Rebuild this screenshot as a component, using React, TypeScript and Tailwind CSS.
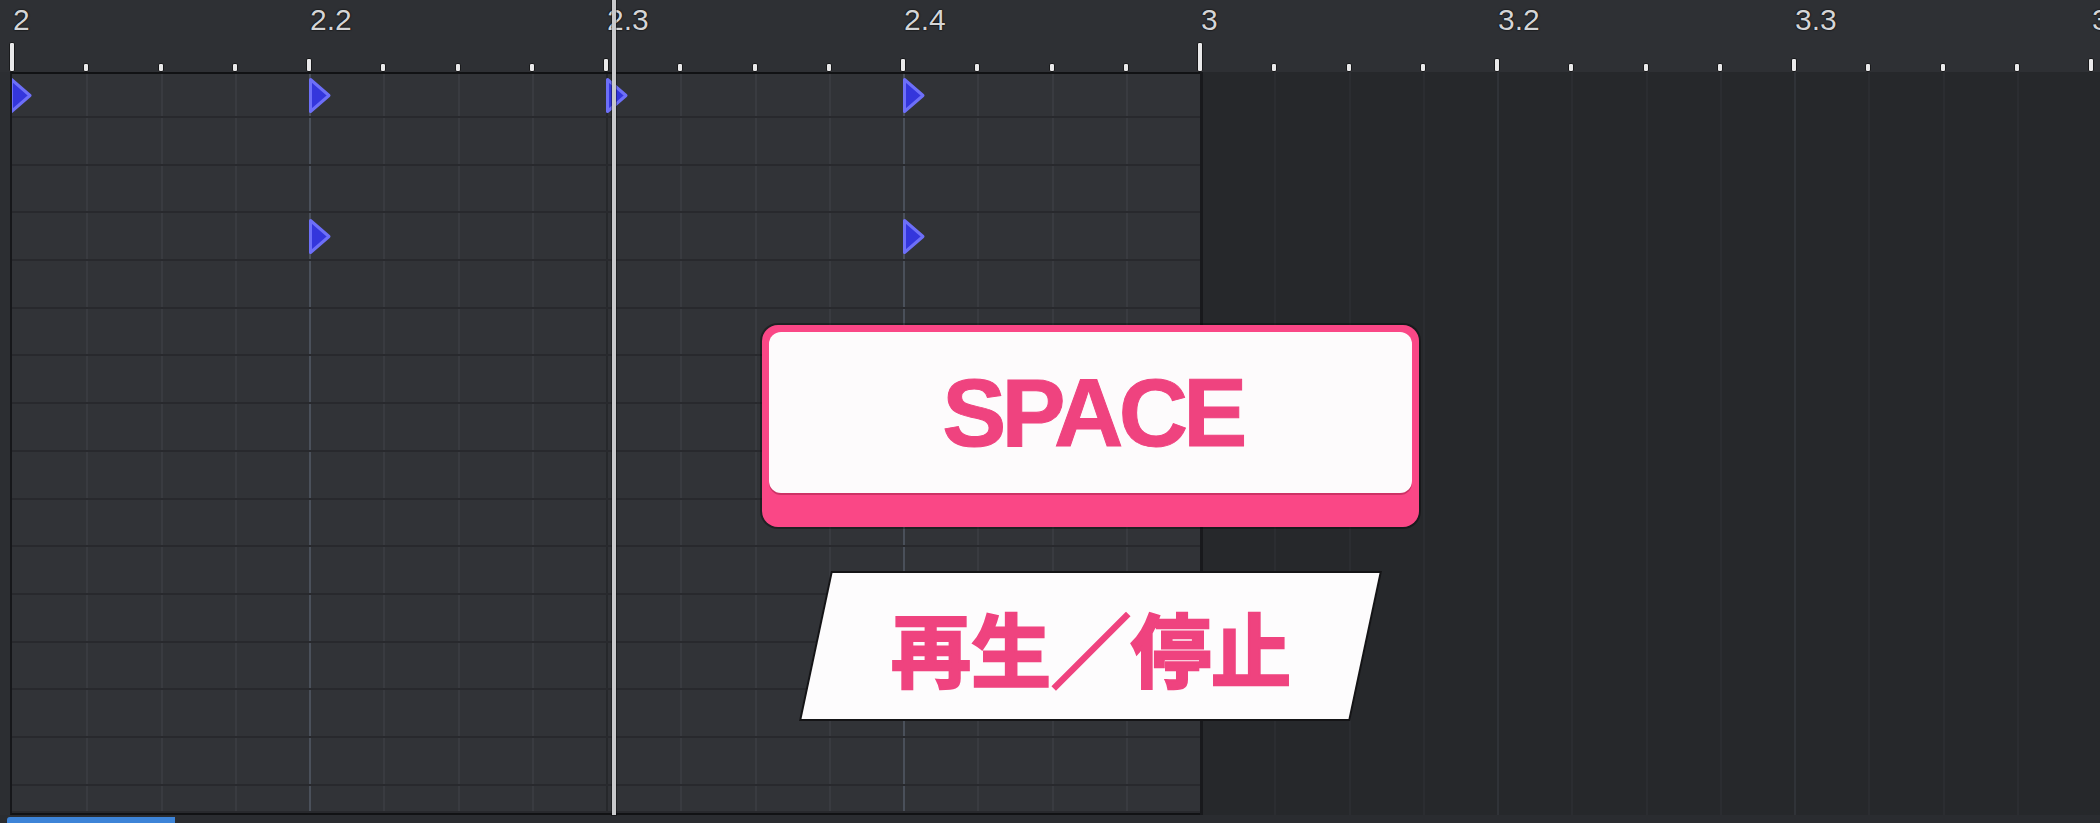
import React from 'react';

const RULER_CELLS = 29;
const LEFT_COLS = 16;
const RIGHT_COLS = 12;
const LABELS: Record<number, string> = {
  0: '2',
  4: '2.2',
  8: '2.3',
  12: '2.4',
  16: '3',
  20: '3.2',
  24: '3.3',
  28: '3.4',
};

// row index -> columns holding a note marker
const MARKERS: Record<number, number[]> = {
  0: [0, 4, 8, 12],
  3: [4, 12],
};

function Marker() {
  return (
    <svg width="25" height="37" viewBox="0 0 25 37" className="shrink-0 -ml-[4px]">
      <polygon
        points="3.5,2.5 22,18.5 3.5,34.5"
        fill="#3436dc"
        stroke="#6d6ff8"
        strokeWidth="3"
        strokeLinejoin="round"
      />
    </svg>
  );
}

function tickHeight(k: number) {
  if (k % 16 === 0) return 'h-[30px]';
  if (k % 4 === 0) return 'h-[14px]';
  return 'h-[9px]';
}

function leftLine(k: number) {
  if (k === 0) return '';
  if (k === 8) return 'border-l-2 border-[#26282b]';
  if (k % 4 === 0) return 'border-l-2 border-[#4a505a]';
  return 'border-l-2 border-[#393b40]';
}

function Ruler() {
  return (
    <div className="h-[72px] shrink-0 flex pl-[9px] bg-[#2e3034] overflow-hidden">
      {Array.from({ length: RULER_CELLS }).map((_, k) => (
        <div key={k} className="w-[74.25px] shrink-0 h-full flex flex-col justify-between">
          <div className="pl-[4px] pt-[5px] h-[36px] text-[30px] leading-[30px] text-[#d4d5d7] whitespace-nowrap [text-shadow:0_0_2px_#000,0_0_1px_#000]">
            {LABELS[k] ?? ''}
          </div>
          <div
            className={`${tickHeight(k)} w-[6px] bg-[#e9e9ea] border border-[#18191b] rounded-[2px]`}
          />
        </div>
      ))}
    </div>
  );
}

function GridRow({ index, height }: { index: number; height: string }) {
  const marks = MARKERS[index] ?? [];
  return (
    <div className={`${height} shrink-0 flex border-b-2 border-[#28292d]`}>
      {Array.from({ length: LEFT_COLS }).map((_, k) => (
        <div key={k} className={`w-[74.25px] shrink-0 h-full flex items-center ${leftLine(k)}`}>
          {marks.includes(k) && <Marker />}
        </div>
      ))}
    </div>
  );
}

export default function App() {
  const rows = [
    'h-[44px]',
    ...Array.from({ length: 14 }).map(() => 'h-[47.7px]'),
    'flex-1',
  ];

  return (
    <div className="relative w-[2100px] h-[823px] flex flex-col overflow-hidden bg-[#2b2d31] font-['Liberation_Sans',Arial,sans-serif]">
      <Ruler />

      <div className="flex-1 flex min-h-0">
        <div className="w-[10px] shrink-0 bg-[#2c2e32]" />
        <div className="w-[1190px] shrink-0 flex flex-col bg-[#313337] border-t-2 border-b-2 border-l-2 border-t-[#111214] border-b-[#111214] border-l-[#16171a] overflow-hidden">
          {rows.map((h, i) => (
            <GridRow key={i} index={i} height={h} />
          ))}
        </div>
        <div className="flex-1 flex bg-[#26282b] overflow-hidden">
          {Array.from({ length: RIGHT_COLS }).map((_, k) => (
            <div
              key={k}
              className={`w-[74.25px] shrink-0 h-full ${
                k === 0
                  ? 'border-l-[3px] border-[#18191c]'
                  : k % 4 === 0
                  ? 'border-l-2 border-[#303338]'
                  : 'border-l-2 border-[#2b2d31]'
              }`}
            />
          ))}
        </div>
      </div>

      <div className="h-[8px] shrink-0 bg-[#2a2c30]">
        <div className="ml-[7px] mt-[2px] w-[168px] h-[6px] bg-[#3d84d8] rounded-tl-[3px]" />
      </div>

      {/* playhead */}
      <div className="absolute left-[612px] top-0 w-[4px] h-[815px] bg-[#c8c9cb] shadow-[0_0_0_1px_rgba(0,0,0,0.35)]" />

      {/* shortcut overlay */}
      <div className="absolute left-[762px] top-[325px] w-[657px] flex flex-col items-center gap-[46px]">
        <div className="w-[657px] h-[202px] rounded-[16px] bg-[#fa4786] pt-[7px] px-[7px] pb-[34px] shadow-[0_0_0_2px_rgba(0,0,0,0.35)]">
          <div className="h-full rounded-[12px] bg-[#fdfbfc] flex items-center justify-center shadow-[0_2px_0_rgba(160,30,70,0.5)]">
            <span className="text-[96px] leading-none font-bold tracking-[-4.6px] text-[#ef437f] pl-[4px] [-webkit-text-stroke:1px_#ef437f]">
              SPACE
            </span>
          </div>
        </div>
        <div className="w-[547px] h-[146px] -skew-x-12 bg-[#fdfcfd] shadow-[0_0_0_2px_#141416] flex items-center justify-center">
          <span className="skew-x-12 text-[80px] leading-none font-bold text-[#ef437f] font-['Noto_Sans_CJK_JP',sans-serif] [-webkit-text-stroke:2.5px_#ef437f]">
            再生／停止
          </span>
        </div>
      </div>
    </div>
  );
}
